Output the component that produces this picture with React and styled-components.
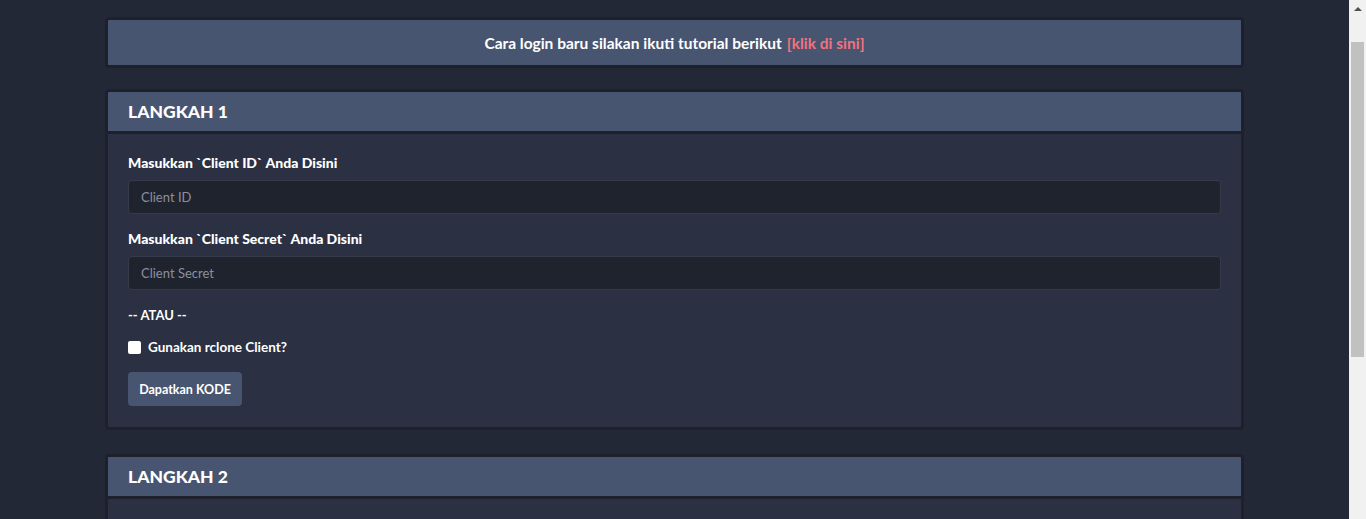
import React from 'react'
import styled, { createGlobalStyle } from 'styled-components'

const GlobalStyle = createGlobalStyle`
  html, body {
    margin: 0;
    background: #232837;
  }
  html {
    overflow: hidden;
  }
  body {
    font-family: 'Lato', 'Liberation Sans', sans-serif;
    color: #ffffff;
  }
`

// stand-in for the browser's vertical scrollbar shown in the shot
const ScrollTrack = styled.div`
  background: #f1f1f1;
  height: 100vh;
  position: fixed;
  right: 0;
  top: 0;
  width: 17px;
`

const ScrollArrow = styled.div`
  border-bottom: 4px solid #505050;
  border-left: 4px solid transparent;
  border-right: 4px solid transparent;
  height: 0;
  margin: 7px auto 0;
  width: 0;
`

const ScrollThumb = styled.div`
  background: #c1c1c1;
  height: 315px;
  margin: 31px auto 0;
  width: 13px;
`

const Wrapper = styled.div`
  padding-right: 17px;
`

const Page = styled.div`
  display: flex;
  flex-direction: column;
  gap: 21px;
  padding: 17px 0 40px;
  width: 1139px;
  margin: 0 auto;
`

const Card = styled.section`
  background: #2b3042;
  border: 3px solid #1e212c;
  border-radius: 4px;
  overflow: hidden;
  margin-bottom: ${({ $space }) => $space || 0}px;
`

const Notice = styled.div`
  align-items: center;
  background: #475570;
  display: flex;
  font-size: 15.5px;
  font-weight: 700;
  height: 45px;
  justify-content: center;
`

const Link = styled.a`
  color: #f2727d;
  cursor: pointer;
  margin-left: 5px;
  text-decoration: none;
`

const Header = styled.header`
  align-items: center;
  background: #475570;
  border-bottom: 3px solid #1e212c;
  display: flex;
  font-size: 17.5px;
  font-weight: 900;
  height: 39px;
  padding: 0 20px;
`

const Body = styled.div`
  display: flex;
  flex-direction: column;
  padding: 19px 20px 21px;
`

const Field = styled.div`
  display: flex;
  flex-direction: column;
  gap: 7px;
  margin-bottom: 15px;
`

const Label = styled.label`
  font-size: 14px;
  font-weight: 900;
  line-height: 20px;
`

const Input = styled.input`
  background: #1f232e;
  border: 1px solid #363b4b;
  border-radius: 4px;
  box-sizing: border-box;
  color: #ffffff;
  font-family: inherit;
  font-size: 13px;
  height: 34px;
  padding: 0 12px;
  outline: none;
  &::placeholder {
    color: #8b909c;
  }
`

const Divider = styled.div`
  font-size: 13px;
  font-weight: 700;
  line-height: 20px;
  margin-bottom: 12px;
`

const CheckRow = styled.label`
  align-items: center;
  display: flex;
  font-size: 13.5px;
  font-weight: 700;
  gap: 7px;
  line-height: 20px;
  margin-bottom: 15px;
`

const Box = styled.input`
  appearance: none;
  background: #ffffff;
  border-radius: 2px;
  height: 13px;
  margin: 0;
  width: 13px;
`

const Button = styled.button`
  align-self: flex-start;
  background: #475570;
  border: none;
  border-radius: 4px;
  color: #ffffff;
  cursor: pointer;
  font-family: inherit;
  font-size: 12.5px;
  font-weight: 700;
  height: 34px;
  width: 114px;
`

const Filler = styled.div`
  height: 230px;
`

const App = () => (
  <>
    <GlobalStyle />
    <Wrapper>
      <Page>
        <Card>
          <Notice>
            Cara login baru silakan ikuti tutorial berikut
            <Link>[klik di sini]</Link>
          </Notice>
        </Card>
        <Card $space={3}>
          <Header>LANGKAH 1</Header>
          <Body>
            <Field>
              <Label>Masukkan `Client ID` Anda Disini</Label>
              <Input placeholder='Client ID' />
            </Field>
            <Field>
              <Label>Masukkan `Client Secret` Anda Disini</Label>
              <Input placeholder='Client Secret' />
            </Field>
            <Divider>-- ATAU --</Divider>
            <CheckRow>
              <Box type='checkbox' />
              Gunakan rclone Client?
            </CheckRow>
            <Button>Dapatkan KODE</Button>
          </Body>
        </Card>
        <Card>
          <Header>LANGKAH 2</Header>
          <Body>
            <Filler />
          </Body>
        </Card>
      </Page>
    </Wrapper>
    <ScrollTrack>
      <ScrollArrow />
      <ScrollThumb />
    </ScrollTrack>
  </>
)

export default App
